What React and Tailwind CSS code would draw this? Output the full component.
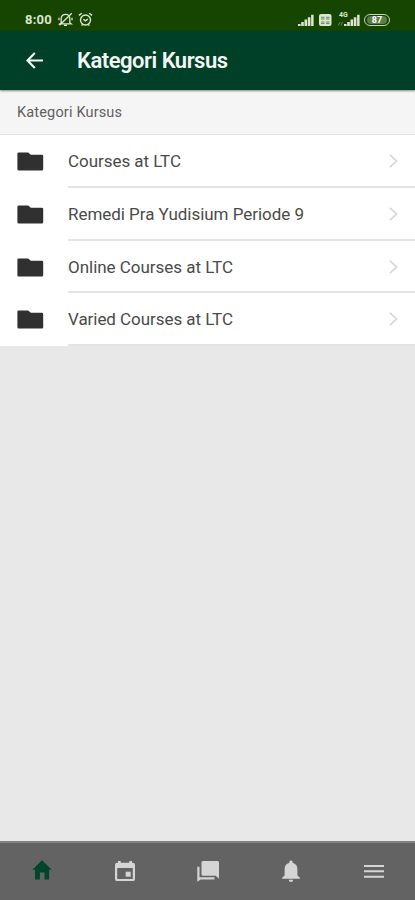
import React from "react";

const categories = [
    {id: 1, name: "Courses at LTC", width: 113},
    {id: 2, name: "Remedi Pra Yudisium Periode 9", width: 236},
    {id: 3, name: "Online Courses at LTC", width: 165},
    {id: 4, name: "Varied Courses at LTC", width: 165},
];

// text with a fixed advance width
function FitText({width, size, weight, children}) {
    return (
        <svg width={width + 4} height="24" className="block overflow-visible" fill="currentColor">
            <text x="0" y="18" fontSize={size} fontWeight={weight} textLength={width}>{children}</text>
        </svg>
    );
}

function SignalIcon() {
    return (
        <svg width="16" height="12" viewBox="0 0 16 12" fill="currentColor">
            <path d="M0 10h2.6v2H0zM3.2 8h2.6v4H3.2zM6.5 5.6h2.6V12H6.5zM9.8 3.2h2.6V12H9.8zM13.1 0.8h2.5V12h-2.5z"/>
        </svg>
    );
}

function StatusBar() {
    return (
        <div className="flex h-[31px] items-center bg-[#154500] pl-[25px] pr-[25px] pt-2 text-[#dbe6d3]">
            <span className="w-[32px] text-[13px] leading-4 font-bold tracking-[0.2px]">8:00</span>
            {/* muted bell */}
            <svg width="15" height="15" viewBox="0 0 15 15" className="ml-px" fill="none" stroke="currentColor" strokeWidth="1.3">
                <path d="M3.2 10.7V6.5C3.2 4 5 2.4 7.5 2.4S11.8 4 11.8 6.5v4.2l1.4 1.2H1.8zM6 13.4h3M13.8 1.3 1.5 13.2M1 8.2V5.8M14 8.2V5.8"/>
            </svg>
            {/* alarm clock */}
            <svg width="15" height="15" viewBox="0 0 15 15" className="ml-[5px]" fill="none" stroke="currentColor" strokeWidth="1.4">
                <circle cx="7.5" cy="8" r="5"/>
                <path d="M5.3 7.2 7.4 8.8 9.9 7M.9 3.4 3.8 1.2M14.1 3.4 11.2 1.2M3.5 13.6l1.2-1.2M11.5 13.6l-1.2-1.2"/>
            </svg>
            <div className="ml-auto flex items-center">
                <SignalIcon/>
                <svg width="13" height="12" viewBox="0 0 13 12" className="ml-[5px]">
                    <rect width="12.5" height="12" rx="2" fill="currentColor"/>
                    <path d="M2 3.3h3.5M7 3.3h3.5M2 5h3.5M7 5h3.5M2 8h3.5M7 8h3.5M2 9.6h3.5M7 9.6h3.5" stroke="#4c7038" strokeWidth="0.8"/>
                </svg>
                <div className="relative ml-[12px]">
                    <SignalIcon/>
                    <span className="absolute -left-[5px] -top-[2px] text-[7px] leading-[6px] font-bold">4G</span>
                    <svg width="5" height="5" viewBox="0 0 5 5" className="absolute -left-[6px] bottom-0" stroke="currentColor" strokeWidth="0.7" opacity="0.6">
                        <path d="M.5 4.5 2 1M3 4.5 4.5 1"/>
                    </svg>
                </div>
                <div className="ml-[4px] flex h-[12px] w-[26px] items-center justify-center rounded-full border border-[#c5d4ba]">
                    <span className="flex h-[8px] w-[20px] items-center justify-center rounded-full bg-[#5c7d49] text-[9px] leading-[8px] font-bold text-white">87</span>
                </div>
            </div>
        </div>
    );
}

function CategoryRow({name, width}) {
    return (
        <li className="flex h-[52.8px] bg-white pl-[17px]">
            <svg width="27" height="19" viewBox="0 0 27 19" className="mt-[17px] shrink-0" fill="#303030">
                <path d="M1.7.4h8.9q.6 0 1 .4l1.5 1.5q.4.4 1 .4h10.8a1.3 1.3 0 0 1 1.3 1.3V17.3a1.3 1.3 0 0 1-1.3 1.3H1.7A1.3 1.3 0 0 1 .4 17.3V1.7A1.3 1.3 0 0 1 1.7.4z"/>
            </svg>
            <div className="ml-[24px] flex flex-1 justify-between border-b-2 border-[#e4e4e4] pr-[17px] pt-[14px] text-[#4a4a4a]">
                <FitText width={width} size="17" weight="400">{name}</FitText>
                <svg width="9" height="14" viewBox="0 0 9 14" className="mt-[5px]" fill="none" stroke="#d6d6d6" strokeWidth="1.7">
                    <path d="M1 .8 7.5 7 1 13.2"/>
                </svg>
            </div>
        </li>
    );
}

function TabBar() {
    return (
        <nav className="grid h-[59px] grid-cols-5 justify-items-center border-t-2 border-[#828282] bg-[#636363] pt-[17px] text-[#d5d5d5]">
            <svg width="20" height="22" viewBox="0 0 20 22" fill="#00462b">
                <path d="M10 .2.4 9.8h2.6v9.6h4.9v-7h4.6v7h4.6V9.8h2.6z"/>
            </svg>
            <svg width="20" height="22" viewBox="0 0 20 22" fill="currentColor">
                <path fillRule="evenodd" d="M3 1h2.7v1.7h8.6V1H17v1.7h.8A2.2 2.2 0 0 1 20 4.9v14a2.2 2.2 0 0 1-2.2 2.2H2.2A2.2 2.2 0 0 1 0 18.9v-14a2.2 2.2 0 0 1 2.2-2.2H3zM2.2 8v10.9h15.6V8z"/>
                <path d="M10.7 11.7h5v5h-5z"/>
            </svg>
            <svg width="22" height="22" viewBox="0 0 22 22" fill="currentColor">
                <path d="M6 1h14.5A1.5 1.5 0 0 1 22 2.5V18.8l-3.3-3H6A1.5 1.5 0 0 1 4.5 14.3V2.5A1.5 1.5 0 0 1 6 1z"/>
                <path d="M.3 6.7h2.2v10.5h15v2.2H3.6l-3.3 2.4z"/>
            </svg>
            <svg width="18" height="22" viewBox="0 0 18 22" fill="currentColor">
                <path d="M9 .5c1 0 1.6.7 1.6 1.7v.5c3.2.8 4.8 3.2 4.8 6.6v6.1l2.5 2.3v1.1H.1v-1.1l2.5-2.3V9.3c0-3.4 1.6-5.8 4.8-6.6v-.5C7.4 1.2 8 .5 9 .5zM6.8 19.8h4.4a2.2 2.2 0 0 1-4.4 0z"/>
            </svg>
            <svg width="20" height="22" viewBox="0 0 20 22" fill="currentColor">
                <path d="M0 5h20v2H0zM0 10.3h20v2H0zM0 15.7h20v2H0z"/>
            </svg>
        </nav>
    );
}

export default function App() {
    return (
        <div className="flex h-[900px] w-[415px] flex-col overflow-hidden bg-[#e8e8e8] font-[Roboto,sans-serif]">
            <StatusBar/>
            <header className="z-10 flex h-[59px] shrink-0 bg-[#004028] pl-[26px] text-[#f4f7f5] shadow-[0_1px_2px_rgba(0,0,0,0.45)]">
                <svg width="17" height="17" viewBox="0 0 17 17" className="mt-[21px]" fill="none" stroke="currentColor" strokeWidth="2.2">
                    <path d="M17 8.5H1.8M8.8 1 1.5 8.5 8.8 16"/>
                </svg>
                <h1 className="ml-[34px] mt-[19px]">
                    <FitText width={151} size="22" weight="600">Kategori Kursus</FitText>
                </h1>
            </header>
            <div className="h-[45px] shrink-0 border-b border-[#e2e2e2] bg-[#f5f5f5] pl-[17px] pt-[8.5px] text-[#606060]">
                <FitText width={105} size="14.5" weight="400">Kategori Kursus</FitText>
            </div>
            <ul className="flex flex-col">
                {categories.map((category) => (
                    <CategoryRow key={category.id} name={category.name} width={category.width}/>
                ))}
            </ul>
            <div className="flex-1"/>
            <TabBar/>
        </div>
    );
}
